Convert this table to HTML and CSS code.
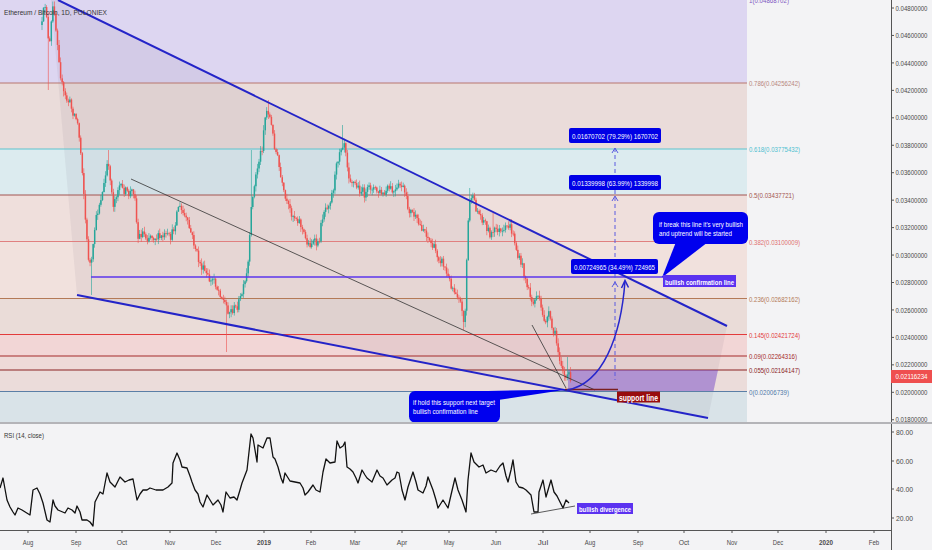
FILE: index.html
```html
<!DOCTYPE html>
<html>
<head>
<meta charset="utf-8">
<title>Ethereum / Bitcoin</title>
<link rel="stylesheet" href="styles.css">
</head>
<body>
<div class="chart">
  <svg class="plot" width="891" height="422" viewBox="0 0 891 422">
    <g class="bands">
      <rect class="b1" x="0" y="-4" width="747" height="87"/>
      <rect class="b2" x="0" y="83" width="747" height="66"/>
      <rect class="b3" x="0" y="149" width="747" height="46"/>
      <rect class="b4" x="0" y="195" width="747" height="46"/>
      <rect class="b5" x="0" y="241" width="747" height="58"/>
      <rect class="b6" x="0" y="299" width="747" height="35"/>
      <rect class="b7" x="0" y="334" width="747" height="22"/>
      <rect class="b8" x="0" y="356" width="747" height="14"/>
      <rect class="b9" x="0" y="370" width="747" height="21"/>
      <rect class="b10" x="0" y="391" width="747" height="31"/>
    </g>
    <polygon class="wedge-fill" points="51,0 58,0 727,326 708,418 77,295"/>
    <g class="fib-lines">
      <line class="f786" x1="0" y1="83" x2="747" y2="83"/>
      <line class="f618" x1="0" y1="149" x2="747" y2="149"/>
      <line class="f500" x1="0" y1="195" x2="747" y2="195"/>
      <line class="f382" x1="0" y1="241.5" x2="747" y2="241.5"/>
      <line class="f236" x1="0" y1="298.5" x2="747" y2="298.5"/>
      <line class="f145" x1="0" y1="334.5" x2="747" y2="334.5"/>
      <line class="f090" x1="0" y1="356" x2="747" y2="356"/>
      <line class="f055" x1="0" y1="370" x2="747" y2="370"/>
      <line class="f000" x1="0" y1="391.5" x2="747" y2="391.5"/>
    </g>
    <g class="t fib-labels">
      <text class="c100" x="749" y="2.5" textLength="40" lengthAdjust="spacingAndGlyphs">1(0.04868702)</text>
      <text class="c786" x="749" y="86" textLength="51" lengthAdjust="spacingAndGlyphs">0.786(0.04256242)</text>
      <text class="c618" x="749" y="152" textLength="51" lengthAdjust="spacingAndGlyphs">0.618(0.03775432)</text>
      <text class="c500" x="749" y="198" textLength="45" lengthAdjust="spacingAndGlyphs">0.5(0.03437721)</text>
      <text class="c382" x="749" y="244.5" textLength="51" lengthAdjust="spacingAndGlyphs">0.382(0.03100009)</text>
      <text class="c236" x="749" y="301.5" textLength="51" lengthAdjust="spacingAndGlyphs">0.236(0.02682162)</text>
      <text class="c145" x="749" y="337.5" textLength="51" lengthAdjust="spacingAndGlyphs">0.145(0.02421724)</text>
      <text class="c090" x="749" y="359" textLength="48" lengthAdjust="spacingAndGlyphs">0.09(0.02264316)</text>
      <text class="c055" x="749" y="373" textLength="51" lengthAdjust="spacingAndGlyphs">0.055(0.02164147)</text>
      <text class="c000" x="749" y="394.5" textLength="40" lengthAdjust="spacingAndGlyphs">0(0.02006739)</text>
    </g>
    <polygon class="target-zone" points="568,370 718,370 713.5,391 568,391"/>
    <g id="candles"></g>
    <line class="thin" x1="131" y1="179" x2="595" y2="390"/>
    <line class="thin" x1="532" y1="325" x2="566" y2="388"/>
    <line class="confirm" x1="91" y1="277" x2="663" y2="277"/>
    <line class="wedge" x1="58" y1="0" x2="727" y2="326"/>
    <line class="wedge" x1="77" y1="295" x2="708" y2="418"/>
    <line class="support" x1="565" y1="389.5" x2="618" y2="389.5"/>
    <line class="dash" x1="615" y1="148" x2="615" y2="380"/>
    <path class="dash-head" d="M612,153 L615,148 L618,153 M612,201 L615,196 L618,201 M612,287 L615,282 L618,287"/>
    <path class="curve" d="M567,390 C603,384 621,336 625,281"/>
    <path class="curve" d="M621.5,288 L625,280.5 L628.5,287.5"/>

    <rect class="mbox" x="569" y="128" width="92" height="15" rx="2"/>
    <text class="t white" x="572" y="138.8" textLength="86" lengthAdjust="spacingAndGlyphs">0.01670702 (79.29%) 1670702</text>
    <rect class="mbox" x="569" y="175" width="92" height="15" rx="2"/>
    <text class="t white" x="572" y="185.8" textLength="86" lengthAdjust="spacingAndGlyphs">0.01339998 (63.99%) 1339998</text>
    <rect class="mbox" x="571" y="259" width="87" height="15" rx="2"/>
    <text class="t white" x="574" y="269.8" textLength="81" lengthAdjust="spacingAndGlyphs">0.00724965 (34.49%) 724965</text>

    <rect class="callout" x="653" y="212" width="95" height="32" rx="6"/>
    <polygon class="callout" points="676,242 708,242 662,277.5"/>
    <text class="t white" x="659" y="226.5" textLength="84" lengthAdjust="spacingAndGlyphs">if break this line it's very bullish</text>
    <text class="t white" x="659" y="235.5" textLength="73" lengthAdjust="spacingAndGlyphs">and uptrend will be started</text>

    <rect class="tag-purple" x="663" y="275" width="73" height="12"/>
    <text class="t white bold" x="665" y="284.5" textLength="69" lengthAdjust="spacingAndGlyphs">bullish confirmation line</text>

    <rect class="callout" x="409" y="391" width="91" height="31.5" rx="6"/>
    <polygon class="callout" points="488,391 567,389.5 498,400"/>
    <text class="t white" x="413" y="404.5" textLength="82" lengthAdjust="spacingAndGlyphs">if hold this support next target</text>
    <text class="t white" x="413" y="413.5" textLength="65" lengthAdjust="spacingAndGlyphs">bullish confirmation line</text>

    <rect class="tag-red" x="617" y="391.5" width="43" height="11"/>
    <text class="t white bold big" x="619" y="400.5" textLength="39" lengthAdjust="spacingAndGlyphs">support line</text>

    <text class="t title" x="4" y="15" textLength="103" lengthAdjust="spacingAndGlyphs">Ethereum / Bitcoin, 1D, POLONIEX</text>
  </svg>

  <svg class="axis" width="41" height="422" viewBox="891 0 41 422">
    <line class="axis-line" x1="891.5" y1="0" x2="891.5" y2="422"/>
    <g id="price-axis" class="t ax small"></g>
    <rect class="last-price" x="891" y="370" width="41" height="13"/>
    <text class="t white small" x="895.5" y="379.3" textLength="32" lengthAdjust="spacingAndGlyphs">0.02116234</text>
  </svg>

  <div class="sep"></div>

  <svg class="plot" width="891" height="106" viewBox="0 424 891 106">
    <text class="t title" x="4" y="438" textLength="40" lengthAdjust="spacingAndGlyphs">RSI (14, close)</text>
    <polyline class="rsi" points="0,488 3,478 7,500 10,507 13,512 15,515 18,508 22,510 30,515 33,490 37,488 40,494 43,503 47,520 50,522 53,500 55,506 58,510 65,513 68,508 72,510 75,513 77,506 80,512 82,520 87,520 90,522 93,526 95,502 100,492 103,494 107,473 110,482 115,487 118,481 120,477 125,482 129,480 133,479 137,500 140,494 143,490 147,490 150,488 156,490 163,490 168,487 172,483 173,463 177,453 180,460 182,467 187,468 190,476 192,482 195,490 198,494 200,502 203,507 207,495 210,500 213,505 218,500 221,505 223,512 226,492 230,498 234,497 237,500 240,490 242,483 247,470 249,452 251,434 253,438 255,450 257,462 258,445 263,448 267,438 270,438 273,457 275,459 278,467 281,478 283,483 285,473 290,481 295,482 300,483 303,488 305,495 308,492 313,485 316,490 320,492 323,472 326,459 330,463 335,462 337,441 340,448 343,446 345,442 347,467 350,469 353,472 356,478 358,483 362,470 365,475 367,478 372,482 377,470 380,476 383,478 387,485 392,480 395,478 397,472 399,473 402,490 405,500 408,487 413,472 416,482 418,490 423,493 426,486 428,477 433,490 436,500 438,508 443,500 448,508 451,495 455,478 458,490 462,500 466,512 468,480 471,453 474,462 479,467 483,465 486,473 491,470 496,472 500,466 503,463 506,476 508,482 511,470 513,460 516,482 519,487 523,488 526,490 531,495 534,512 538,512 539,492 543,480 546,497 551,480 554,492 557,496 559,500 563,508 566,500 569,503"/>
    <line class="thin" x1="531" y1="514" x2="575" y2="506"/>
    <rect class="tag-purple" x="577" y="503" width="56" height="11"/>
    <text class="t white bold" x="579" y="511.8" textLength="52" lengthAdjust="spacingAndGlyphs">bullish divergence</text>
  </svg>

  <svg class="axis" width="41" height="106" viewBox="891 424 41 106">
    <line class="axis-line" x1="891.5" y1="424" x2="891.5" y2="530"/>
    <path class="tick" d="M891,432 H894 M891,461 H894 M891,489 H894 M891,518 H894"/>
    <g class="t ax">
      <text x="896" y="435" textLength="17" lengthAdjust="spacingAndGlyphs">80.00</text>
      <text x="896" y="464" textLength="17" lengthAdjust="spacingAndGlyphs">60.00</text>
      <text x="896" y="492" textLength="17" lengthAdjust="spacingAndGlyphs">40.00</text>
      <text x="896" y="521" textLength="17" lengthAdjust="spacingAndGlyphs">20.00</text>
    </g>
  </svg>

  <svg class="plot" width="891" height="20" viewBox="0 530 891 20">
    <line class="axis-line" x1="0" y1="530.5" x2="891" y2="530.5"/>
    <g id="time-axis" class="t ax"></g>
  </svg>

  <svg class="axis" width="41" height="20" viewBox="891 530 41 20">
    <line class="axis-line" x1="891.5" y1="530" x2="891.5" y2="550"/>
  </svg>
</div>
<script src="script.js"></script>
</body>
</html>
```

FILE: styles.css
```css
html, body {
  margin: 0;
  padding: 0;
  background: #f3f3f5;
}

.chart {
  display: grid;
  grid-template-columns: 891px 41px;
  grid-template-rows: 422px 2px 106px 20px;
  width: 932px;
  height: 550px;
  overflow: hidden;
}

.chart svg {
  display: block;
  overflow: hidden;
}

.sep {
  grid-column: 1 / span 2;
  background: #b4b4b8;
}

.t {
  font-family: "Liberation Sans", Arial, sans-serif;
  font-size: 8px;
}

.small { font-size: 6.8px; }
.big { font-size: 9px; }
.bold { font-weight: bold; }
.white { fill: #ffffff; }
.title { fill: #333333; }
.ax { fill: #4a4a4a; }

.b1 { fill: #ddd6f1; }
.b2 { fill: #eadcda; }
.b3 { fill: #dcebef; }
.b4 { fill: #efdfdc; }
.b5 { fill: #f1e1dd; }
.b6 { fill: #eadcd8; }
.b7 { fill: #f2d6d6; }
.b8 { fill: #eedad8; }
.b9 { fill: #ebdcda; }
.b10 { fill: #d9e3e8; }

.wedge-fill { fill: rgba(80, 70, 100, 0.07); }

.fib-lines line { stroke-width: 1; }
.f786 { stroke: #b8766e; }
.f618 { stroke: #5bc4cf; }
.f500 { stroke: #a35450; }
.f382 { stroke: #e08080; }
.f236 { stroke: #b47a57; }
.f145 { stroke: #e33b3b; }
.f090 { stroke: #a52a2a; }
.f055 { stroke: #8b2323; }
.f000 { stroke: #5b7fa6; }

.c100 { fill: #7e57c2; }
.c786 { fill: #b8867c; }
.c618 { fill: #4fbfd0; }
.c500 { fill: #a35450; }
.c382 { fill: #e07070; }
.c236 { fill: #b47a57; }
.c145 { fill: #e33b3b; }
.c090 { fill: #a52a2a; }
.c055 { fill: #8b2323; }
.c000 { fill: #4f78a8; }

.target-zone { fill: rgba(110, 60, 210, 0.42); }

.up { fill: #26a69a; }
.down { fill: #ef5350; }

.thin { stroke: #333333; stroke-width: 0.8; }
.confirm { stroke: #5b36ec; stroke-width: 1.5; }
.wedge { stroke: #2424c8; stroke-width: 2; }
.support { stroke: #7a1f1f; stroke-width: 1.6; }
.dash { stroke: #5a5ae0; stroke-width: 1; stroke-dasharray: 4 3; }
.dash-head { fill: none; stroke: #5a5ae0; stroke-width: 1; }
.curve { fill: none; stroke: #2626cc; stroke-width: 1.5; }

.mbox { fill: #0000e6; }
.callout { fill: #0000ee; }
.tag-purple { fill: #5b32f0; }
.tag-red { fill: #980d0d; }

.axis-line { stroke: #555555; stroke-width: 1; }
.tick { stroke: #555555; stroke-width: 1; }
.last-price { fill: #ef4f4f; }

.rsi { fill: none; stroke: #111111; stroke-width: 1.3; stroke-linejoin: round; }
```

FILE: script.js
```js
(function () {
  var NS = 'http://www.w3.org/2000/svg';

  function el(name, attrs, parent) {
    var e = document.createElementNS(NS, name);
    for (var k in attrs) e.setAttribute(k, attrs[k]);
    parent.appendChild(e);
    return e;
  }

  /* ---------- price axis ---------- */
  var pa = document.getElementById('price-axis');
  var axisSvg = pa.ownerSVGElement;
  for (var k = 0; k < 16; k++) {
    var y = 8 + k * 27.45;
    var v = (0.048 - k * 0.002).toFixed(8);
    el('line', { x1: 891, y1: y, x2: 894, y2: y, 'class': 'tick' }, axisSvg);
    var t = el('text', { x: 895.5, y: y + 2.6, textLength: 32, lengthAdjust: 'spacingAndGlyphs' }, pa);
    t.textContent = v;
  }

  /* ---------- time axis ---------- */
  var ta = document.getElementById('time-axis');
  var timeSvg = ta.ownerSVGElement;
  var months = [
    ['Aug', 28], ['Sep', 76], ['Oct', 122], ['Nov', 170], ['Dec', 216], ['2019', 264, 1],
    ['Feb', 311], ['Mar', 355], ['Apr', 402], ['May', 449], ['Jun', 496], ['Jul', 543],
    ['Aug', 590], ['Sep', 638], ['Oct', 684], ['Nov', 732], ['Dec', 778], ['2020', 826, 1], ['Feb', 874]
  ];
  months.forEach(function (m) {
    el('line', { x1: m[1], y1: 530, x2: m[1], y2: 533, 'class': 'tick' }, timeSvg);
    var len = m[2] ? 14 : 10.5;
    var tt = el('text', {
      x: m[1] - len / 2, y: 544.5, textLength: len, lengthAdjust: 'spacingAndGlyphs',
      'class': m[2] ? 'bold' : ''
    }, ta);
    tt.textContent = m[0];
  });

  /* ---------- candles ---------- */
  var pts = [[42,25],[44,8],[46,2],[48,40],[50,45],[52,12],[54,5],[56,30],[58,45],[60,70],[62,85],[64,95],[67,100],[70,103],[72,110],[75,115],[78,125],[80,145],[82,165],[84,195],[86,230],[88,255],[91,268],[93,250],[95,225],[97,215],[100,200],[102,195],[105,180],[107,165],[110,175],[113,205],[116,195],[119,185],[122,190],[125,190],[128,195],[131,192],[134,190],[136,200],[137,240],[140,235],[143,232],[147,238],[150,235],[155,237],[160,238],[165,236],[170,238],[173,232],[176,218],[178,205],[181,210],[184,215],[187,222],[190,230],[193,240],[196,250],[199,262],[202,268],[205,272],[208,278],[211,282],[214,278],[217,288],[220,292],[223,300],[226,305],[229,312],[232,310],[236,308],[240,300],[243,290],[246,280],[248,265],[250,235],[252,195],[254,190],[256,175],[258,165],[260,155],[262,148],[264,125],[266,112],[268,110],[270,118],[272,130],[275,148],[278,160],[281,180],[284,195],[287,205],[290,210],[293,215],[297,218],[300,222],[303,232],[306,240],[309,245],[312,242],[315,243],[318,245],[320,235],[322,218],[324,210],[327,205],[330,200],[333,190],[336,170],[338,158],[340,148],[342,145],[344,140],[346,150],[348,172],[351,180],[354,183],[357,187],[360,190],[363,192],[366,195],[369,188],[372,186],[375,190],[378,192],[381,193],[384,196],[387,190],[390,188],[393,193],[396,192],[399,186],[402,185],[405,195],[408,208],[411,212],[414,215],[417,222],[420,226],[423,228],[426,232],[429,240],[432,245],[435,250],[438,256],[441,260],[444,265],[447,275],[450,282],[453,288],[456,292],[459,296],[461,305],[463,320],[465,315],[467,250],[469,205],[471,195],[473,200],[476,208],[479,214],[482,218],[485,222],[488,230],[491,235],[494,232],[497,228],[500,232],[503,235],[506,228],[509,225],[512,232],[515,242],[518,258],[521,262],[524,272],[527,285],[530,295],[533,305],[535,300],[537,292],[539,300],[541,310],[543,318],[546,320],[549,315],[551,325],[553,332],[555,335],[557,345],[559,355],[561,362],[563,370],[565,378],[567,380],[569,374],[571,377]];
  var wicks = [[48,90],[92,295],[108,150],[226,352],[252,150],[268,100],[343,125],[463,330],[470,188],[493,213],[568,357]];

  function interp(x) {
    if (x <= pts[0][0]) return pts[0][1];
    for (var i = 1; i < pts.length; i++) {
      if (x <= pts[i][0]) {
        var a = pts[i - 1], b = pts[i];
        return a[1] + (b[1] - a[1]) * (x - a[0]) / (b[0] - a[0]);
      }
    }
    return pts[pts.length - 1][1];
  }

  var seed = 12345;
  function rnd() {
    seed = (seed * 16807) % 2147483647;
    return seed / 2147483647;
  }

  var g = document.getElementById('candles');
  var prev = pts[0][1];
  for (var x = 42; x <= 571.5; x += 1.55) {
    var c = interp(x) + (rnd() - 0.5) * 9;
    var o = prev;
    var top = Math.min(o, c), bot = Math.max(o, c);
    if (bot - top < 0.8) bot = top + 0.8;
    var hi = top - rnd() * 5 - 0.3;
    var lo = bot + rnd() * 5 + 0.3;
    for (var w = 0; w < wicks.length; w++) {
      if (Math.abs(wicks[w][0] - x) < 0.78) {
        if (wicks[w][1] < top) hi = wicks[w][1]; else lo = wicks[w][1];
      }
    }
    var cls = c < o ? 'up' : 'down';
    el('rect', { x: (x - 0.3).toFixed(2), y: hi.toFixed(2), width: 0.6, height: (lo - hi).toFixed(2), 'class': cls }, g);
    el('rect', { x: (x - 0.75).toFixed(2), y: top.toFixed(2), width: 1.5, height: (bot - top).toFixed(2), 'class': cls }, g);
    prev = c;
  }
})();
```
